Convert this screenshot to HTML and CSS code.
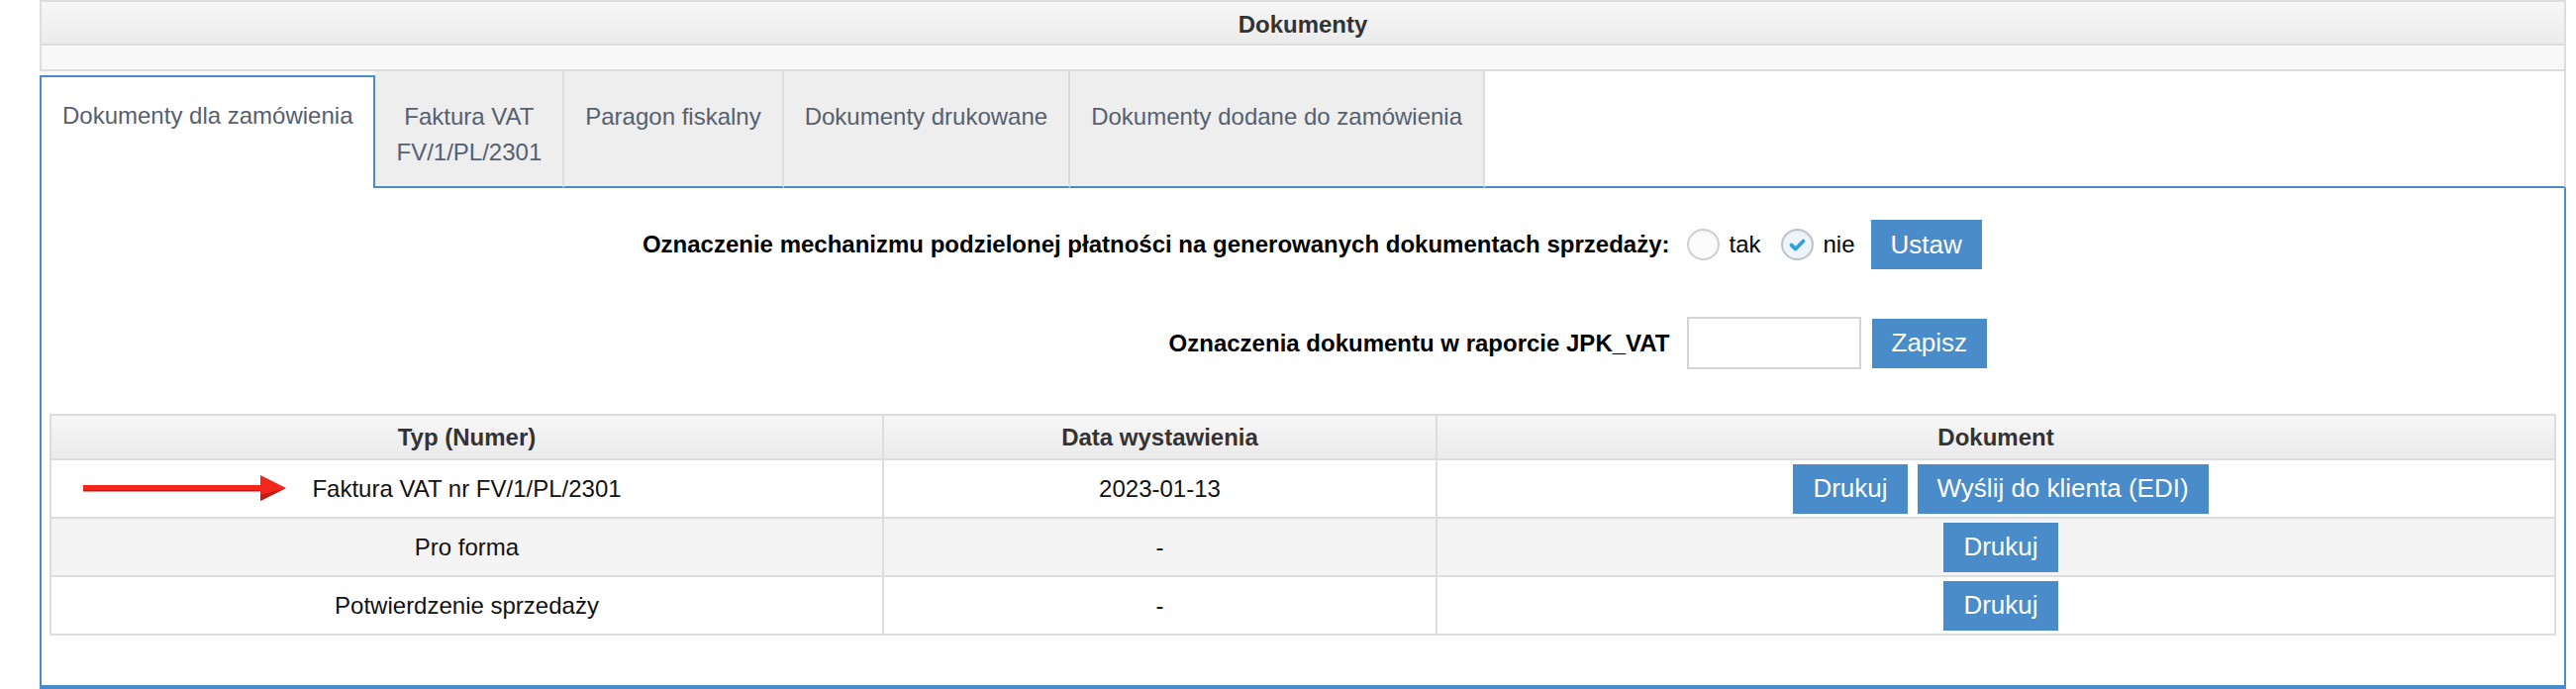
FILE: index.html
```html
<!DOCTYPE html>
<html>
<head>
<meta charset="UTF-8">
<link rel="stylesheet" href="styles.css">
</head>
<body>
<div class="box">
	<div class="box-title">Dokumenty</div>
	<div class="box-sub"></div>
	<div class="tabs">
		<div class="tab active">Dokumenty dla zamówienia</div>
		<div class="tab">Faktura VAT<br>FV/1/PL/2301</div>
		<div class="tab">Paragon fiskalny</div>
		<div class="tab">Dokumenty drukowane</div>
		<div class="tab">Dokumenty dodane do zamówienia</div>
		<div class="tab-fill"></div>
	</div>
	<div class="panel">
		<div class="split-form">
			<div class="label">Oznaczenie mechanizmu podzielonej płatności na generowanych dokumentach sprzedaży:</div>
			<div class="controls">
				<span class="radio"></span>
				<span class="opt">tak</span>
				<span class="radio checked">
					<svg width="33" height="32" viewBox="0 0 33 32"><path d="M10.5 16.5 L14.7 20.5 L22.5 12.5" fill="none" stroke="#3a9fd5" stroke-width="3.8" stroke-linecap="round" stroke-linejoin="round"/></svg>
				</span>
				<span class="opt">nie</span>
				<input type="button" class="btn btn-ustaw" value="Ustaw">
			</div>
			<div class="label">Oznaczenia dokumentu w raporcie JPK_VAT</div>
			<div class="controls">
				<input type="text" class="jpk-input">
				<input type="button" class="btn btn-zapisz" value="Zapisz">
			</div>
		</div>

		<table class="docs">
			<colgroup>
				<col class="c-type">
				<col class="c-date">
				<col>
			</colgroup>
			<tr>
				<th>Typ (Numer)</th>
				<th>Data wystawienia</th>
				<th>Dokument</th>
			</tr>
			<tr>
				<td class="marked">
					<svg class="arrow" width="206" height="26" viewBox="0 0 206 26">
						<rect x="0" y="10" width="181" height="6" fill="#f3261b"/>
						<rect x="0" y="15" width="181" height="1.5" fill="#c41a10"/>
						<polygon points="179,0 205,13 179,26" fill="#f3261b"/>
						<polygon points="179,20 205,13 179,26" fill="#c41a10"/>
					</svg>
					Faktura VAT nr FV/1/PL/2301
				</td>
				<td>2023-01-13</td>
				<td class="actions">
					<div class="btn-row">
						<input type="button" class="btn" value="Drukuj">
						<input type="button" class="btn" value="Wyślij do klienta (EDI)">
					</div>
				</td>
			</tr>
			<tr class="odd">
				<td>Pro forma</td>
				<td>-</td>
				<td class="actions"><div class="btn-row"><input type="button" class="btn" value="Drukuj"></div></td>
			</tr>
			<tr>
				<td>Potwierdzenie sprzedaży</td>
				<td>-</td>
				<td class="actions"><div class="btn-row"><input type="button" class="btn" value="Drukuj"></div></td>
			</tr>
		</table>
	</div>
</div>
</body>
</html>
```

FILE: styles.css
```css
* {
	box-sizing: border-box;
}
body {
	margin: 0;
	font-family: 'Liberation Sans', Arial, sans-serif;
	font-size: 24px;
	color: #000;
	background: #fff;
}

.box {
	margin: 0 10px 0 40px;
}
.box-title {
	height: 46px;
	padding-top: 4px;
	line-height: 38px;
	border: 2px solid #ddd;
	background: linear-gradient(#f7f7f7, #ebebeb);
	text-align: center;
	font-weight: bold;
	color: #333;
}
.box-sub {
	height: 26px;
	border: 2px solid #ddd;
	border-top: 0;
	background: #f8f8f8;
}

.tabs {
	display: flex;
	align-items: stretch;
}
.tab {
	padding: 28px 21px 16px;
	line-height: 36px;
	background: #eee;
	color: #56606e;
	text-align: center;
	white-space: nowrap;
	border-right: 2px solid #ddd;
	border-bottom: 2px solid #4a8bc9;
}
.tab.active {
	margin-top: 4px;
	padding-top: 21px;
	background: #fff;
	border: 2px solid #4a8bc9;
	border-bottom: 0;
}
.tab-fill {
	flex: 1;
	border-right: 2px solid #ddd;
	border-bottom: 2px solid #4a8bc9;
}

.panel {
	height: 506px;
	padding: 32px 8px 0;
	border: 2px solid #4a8bc9;
	border-top: 0;
	border-bottom-width: 4px;
}

.split-form {
	display: grid;
	grid-template-columns: auto auto;
	justify-content: center;
	align-items: center;
	column-gap: 17px;
	row-gap: 48px;
	padding-left: 24px;
}
.label {
	font-weight: bold;
	text-align: right;
}
.controls {
	display: flex;
	align-items: center;
}
.radio {
	width: 33px;
	height: 32px;
	border: 2px solid #cfcfcf;
	border-radius: 50%;
	background: #fbfbfb;
	box-shadow: inset 0 1px 2px rgba(0,0,0,0.06);
}
.radio svg {
	display: block;
	margin: -2px;
}
.radio.checked {
	border-color: #bcc2c8;
	background: #eef4fa;
}
.opt {
	margin: 0 20px 0 10px;
}
.opt + .btn {
	margin-left: -4px;
}

.btn {
	height: 50px;
	padding: 0 20px;
	border: 0;
	border-radius: 0;
	background: #4a8bc9;
	color: #fff;
	font-family: 'Liberation Sans', Arial, sans-serif;
	font-size: 26px;
	cursor: pointer;
}
.jpk-input {
	width: 176px;
	height: 53px;
	margin-right: 11px;
	border: 2px solid #d4d4d4;
	background: #fff;
	font-size: 24px;
}

.docs {
	width: 100%;
	margin-top: 45px;
	border-collapse: collapse;
	border: 2px solid #ddd;
}
.c-type {
	width: 841px;
}
.c-date {
	width: 559px;
}
.docs th, .docs td {
	border: 2px solid #ddd;
	text-align: center;
	padding: 0;
}
.docs th {
	height: 45px;
	background: linear-gradient(#f7f7f7, #ebebeb);
	color: #333;
	font-weight: bold;
}
.docs td {
	height: 59px;
	color: #111;
}
.docs tr.odd td {
	background: #f4f4f4;
}
.marked {
	position: relative;
}
.arrow {
	position: absolute;
	left: 32px;
	top: 15px;
}
.actions {
	padding-left: 10px !important;
}
.btn-row {
	display: flex;
	justify-content: center;
	gap: 10px;
}
```
